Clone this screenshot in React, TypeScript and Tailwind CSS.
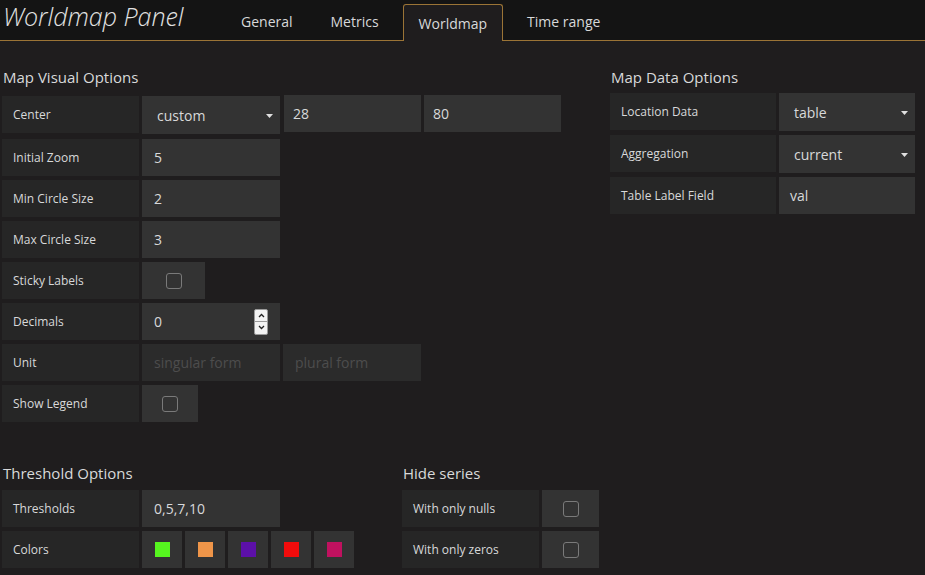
import React from 'react';

const Label = ({ text, w = 'w-[137px]' }: { text: string; w?: string }) => (
  <div className={`${w} h-[37px] shrink-0 bg-[#262626] flex items-center pl-[11px] text-[12px] text-[#d8d9da]`}>
    {text}
  </div>
);

const Input = ({ value, w = 'w-[138px]', pl = 'pl-[12px]' }: { value: string; w?: string; pl?: string }) => (
  <div className={`${w} h-[37px] shrink-0 bg-[#333333] flex items-center ${pl} text-[14px] text-[#d8d9da]`}>
    {value}
  </div>
);

const Placeholder = ({ text }: { text: string }) => (
  <div className="w-[138px] h-[37px] shrink-0 bg-[#2b2b2b] flex items-center pl-[12px] text-[14px] text-[#4d4d4d]">
    {text}
  </div>
);

const Select = ({ value, w = 'w-[138px]' }: { value: string; w?: string }) => (
  <div className={`${w} h-[38px] shrink-0 bg-[#333333] flex items-center justify-between pl-[15px] pr-[7px] text-[14px] text-[#d8d9da]`}>
    <span>{value}</span>
    <svg width="7" height="4" viewBox="0 0 7 4" className="mt-[1px]">
      <path d="M0 0 L7 0 L3.5 4 Z" fill="#e0e0e0" />
    </svg>
  </div>
);

const Check = ({ w }: { w: string }) => (
  <div className={`${w} h-[37px] shrink-0 bg-[#333333] flex items-center justify-center`}>
    <div className="w-4 h-4 rounded-[3px] border border-[#7a7a7a]" />
  </div>
);

const Row = ({ children, className = '' }: { children: React.ReactNode; className?: string }) => (
  <div className={`flex gap-[3px] ${className}`}>{children}</div>
);

const Heading = ({ text, className = '' }: { text: string; className?: string }) => (
  <div className={`h-[20px] leading-[20px] text-[15px] text-[#d8d9da] pl-[1px] ${className}`}>{text}</div>
);

const tabs = ['General', 'Metrics', 'Worldmap', 'Time range'];

const swatches = ['#56f51f', '#ef9549', '#5c10a8', '#f20c0c', '#c0115f'];

export default function App() {
  return (
    <div className="w-[925px] h-[575px] overflow-hidden bg-[#1f1d1e] font-['Open_Sans',sans-serif]">
      <div className="h-[41px] bg-[#141414] border-b border-[#9b7436] flex items-end">
        <div className="w-[227px] self-stretch flex items-start pl-[3px]">
          <span className="text-[25px] italic font-light text-[#e2e2e2] leading-[32px]">Worldmap Panel</span>
        </div>
        <div className="flex gap-[10px] -mb-px">
          {tabs.map((t) =>
            t === 'Worldmap' ? (
              <div
                key={t}
                className="h-[37px] px-[15px] pt-[8px] bg-[#1f1d1e] border border-b-0 border-[#9b7436] rounded-t-[3px] text-[14px] text-[#d8d9da]"
              >
                {t}
              </div>
            ) : (
              <div key={t} className="h-[36px] px-[14px] pt-[7px] text-[14px] text-[#d8d9da]">
                {t}
              </div>
            )
          )}
        </div>
      </div>

      <div className="pl-[2px]">
        <div className="flex">
          <div className="w-[608px]">
            <Heading text="Map Visual Options" className="mt-[26px] mb-[9px]" />
            <div className="flex flex-col gap-[4px]">
              <Row className="mb-[1px]">
                <Label text="Center" />
                <Select value="custom" />
                <div className="flex gap-[3px] -mt-[1px] ml-[1px]">
                  <Input value="28" w="w-[137px]" pl="pl-[9px]" />
                  <Input value="80" w="w-[137px]" pl="pl-[9px]" />
                </div>
              </Row>
              <Row>
                <Label text="Initial Zoom" />
                <Input value="5" />
              </Row>
              <Row>
                <Label text="Min Circle Size" />
                <Input value="2" />
              </Row>
              <Row>
                <Label text="Max Circle Size" />
                <Input value="3" />
              </Row>
              <Row>
                <Label text="Sticky Labels" />
                <Check w="w-[63px]" />
              </Row>
              <Row>
                <Label text="Decimals" />
                <div className="w-[138px] h-[37px] bg-[#333333] flex items-center justify-between pl-[12px] pr-[12px] text-[14px] text-[#d8d9da]">
                  <span>0</span>
                  <div className="w-[14px] h-[26px] flex flex-col rounded-[2px] overflow-hidden bg-[#f2f2f2] border border-[#9a9a9a]">
                    <div className="flex-1 flex items-center justify-center border-b border-[#9a9a9a]">
                      <svg width="7" height="5" viewBox="0 0 7 5">
                        <path d="M1 4 L3.5 1.5 L6 4" fill="none" stroke="#222" strokeWidth="1.3" />
                      </svg>
                    </div>
                    <div className="flex-1 flex items-center justify-center">
                      <svg width="7" height="5" viewBox="0 0 7 5">
                        <path d="M1 1 L3.5 3.5 L6 1" fill="none" stroke="#222" strokeWidth="1.3" />
                      </svg>
                    </div>
                  </div>
                </div>
              </Row>
              <Row>
                <Label text="Unit" />
                <Placeholder text="singular form" />
                <Placeholder text="plural form" />
              </Row>
              <Row>
                <Label text="Show Legend" />
                <Check w="w-[56px]" />
              </Row>
            </div>
          </div>

          <div>
            <Heading text="Map Data Options" className="mt-[26px] mb-[6px]" />
            <div className="flex flex-col gap-[4px]">
              <Row>
                <Label text="Location Data" w="w-[166px]" />
                <Select value="table" w="w-[136px]" />
              </Row>
              <Row>
                <Label text="Aggregation" w="w-[166px]" />
                <Select value="current" w="w-[136px]" />
              </Row>
              <Row>
                <Label text="Table Label Field" w="w-[166px]" />
                <Input value="val" w="w-[136px]" pl="pl-[11px]" />
              </Row>
            </div>
          </div>
        </div>

        <div className="flex mt-[41px]">
          <div className="w-[400px]">
            <Heading text="Threshold Options" className="mb-[7px]" />
            <div className="flex flex-col gap-[4px]">
              <Row>
                <Label text="Thresholds" />
                <Input value="0,5,7,10" pl="pl-[12px]" />
              </Row>
              <Row>
                <Label text="Colors" />
                {swatches.map((c) => (
                  <div key={c} className="w-[40px] h-[37px] bg-[#333333] flex items-center justify-center">
                    <div className="w-[15px] h-[15px]" style={{ backgroundColor: c }} />
                  </div>
                ))}
              </Row>
            </div>
          </div>
          <div>
            <Heading text="Hide series" className="mb-[7px]" />
            <div className="flex flex-col gap-[4px]">
              <Row>
                <Label text="With only nulls" />
                <Check w="w-[57px]" />
              </Row>
              <Row>
                <Label text="With only zeros" />
                <Check w="w-[57px]" />
              </Row>
            </div>
          </div>
        </div>
      </div>
    </div>
  );
}
